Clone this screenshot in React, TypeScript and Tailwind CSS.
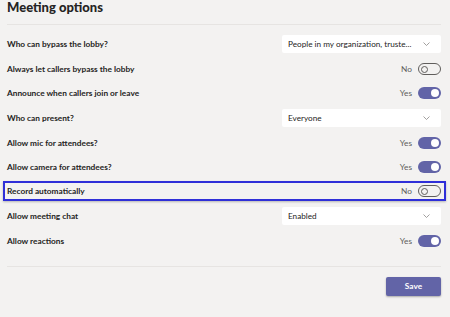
import React from "react";

type Option =
  | { label: string; kind: "select"; value: string }
  | { label: string; kind: "toggle"; on: boolean; highlight?: boolean };

const options: Option[] = [
  { label: "Who can bypass the lobby?", kind: "select", value: "People in my organization, truste..." },
  { label: "Always let callers bypass the lobby", kind: "toggle", on: false },
  { label: "Announce when callers join or leave", kind: "toggle", on: true },
  { label: "Who can present?", kind: "select", value: "Everyone" },
  { label: "Allow mic for attendees?", kind: "toggle", on: true },
  { label: "Allow camera for attendees?", kind: "toggle", on: true },
  { label: "Record automatically", kind: "toggle", on: false, highlight: true },
  { label: "Allow meeting chat", kind: "select", value: "Enabled" },
  { label: "Allow reactions", kind: "toggle", on: true },
];

function Toggle({ on }: { on: boolean }) {
  return (
    <div className="flex items-center gap-[6px]">
      <span className="text-[8.3px] text-[#605e5c]">{on ? "Yes" : "No"}</span>
      <div
        className={
          on
            ? "flex h-[12px] w-[23px] items-center justify-end rounded-full bg-[#6264a7] px-[2px]"
            : "flex h-[12px] w-[23px] items-center justify-start rounded-full border border-[#605e5c] px-[2px]"
        }
      >
        {on ? (
          <div className="h-[8px] w-[8px] rounded-full bg-white" />
        ) : (
          <div className="h-[7px] w-[7px] rounded-full border border-[#605e5c]" />
        )}
      </div>
    </div>
  );
}

function Select({ value }: { value: string }) {
  return (
    <div className="flex h-[18px] w-[159px] items-center justify-between rounded-[2px] bg-white pl-[6px] pr-[11px]">
      <span className="whitespace-nowrap text-[8.2px] text-[#252423]">{value}</span>
      <svg width="7" height="4" viewBox="0 0 7 4" fill="none">
        <path d="M0.5 0.5L3.5 3.5L6.5 0.5" stroke="#8a8886" strokeWidth="0.8" />
      </svg>
    </div>
  );
}

export default function App() {
  return (
    <div
      className="h-[317px] w-[450px] bg-[#f3f2f1] pl-[7px] pr-[9px]"
      style={{ fontFamily: 'Lato, "Liberation Sans", sans-serif' }}
    >
      <h1 className="h-[24px] text-[13px] leading-[15px] font-black text-[#252423]">
        Meeting options
      </h1>
      <div className="h-px bg-[#e6e4e2]" />
      <div className="flex flex-col pt-[6px]">
        {options.map((o) => (
          <div
            key={o.label}
            className={
              o.kind === "select"
                ? "flex h-[26px] items-center justify-between"
                : "relative flex h-[24px] items-center justify-between"
            }
          >
            {o.kind === "toggle" && o.highlight && (
              <div className="pointer-events-none absolute top-[2px] bottom-[2px] -left-[4px] -right-[5px] border-2 border-[#2f2fd8] shadow-[0_1px_2px_rgba(0,0,0,0.25)]" />
            )}
            <span className="text-[8.3px] font-bold text-[#252423]">{o.label}</span>
            {o.kind === "select" ? <Select value={o.value} /> : <Toggle on={o.on} />}
          </div>
        ))}
      </div>
      <div className="mt-[13px] h-px bg-[#e6e4e2]" />
      <div className="flex justify-end pt-[10px]">
        <button className="h-[19px] w-[55px] rounded-[2px] bg-[#6264a7] text-[8.3px] font-bold text-white shadow-[0_1px_2px_rgba(0,0,0,0.3)]">
          Save
        </button>
      </div>
    </div>
  );
}
